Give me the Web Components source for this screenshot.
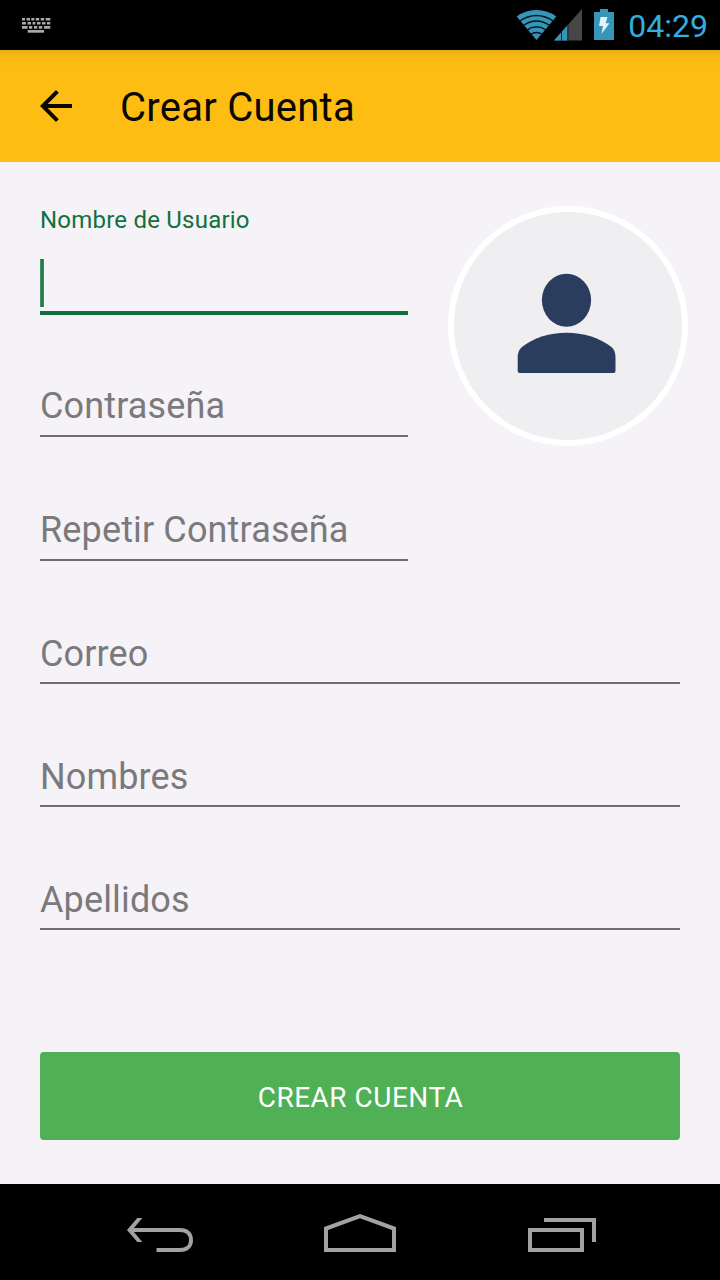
<!DOCTYPE html>
<html lang="es">
<head>
<meta charset="utf-8">
<title>Crear Cuenta</title>
<style>
  body {
    margin: 0;
    width: 720px;
    height: 1280px;
    overflow: hidden;
    background: #f5f3f7;
    font-family: Roboto, "Noto Sans", sans-serif;
    display: flex;
    flex-direction: column;
  }
  main {
    flex: 1;
    padding: 0 40px;
    display: flex;
    flex-direction: column;
  }
  .top {
    display: flex;
    gap: 40px;
  }
  .top > div {
    flex: none;
    width: 368px;
  }
  user-avatar {
    margin-top: 44px;
  }
</style>
</head>
<body>
  <status-bar>04:29</status-bar>
  <app-bar>Crear Cuenta</app-bar>
  <main>
    <div class="top">
      <div>
        <text-field focused style="height: 153px">Nombre de Usuario</text-field>
        <text-field style="height: 122px; --gap: 8px">Contraseña</text-field>
        <text-field style="height: 124px; --gap: 8px">Repetir Contraseña</text-field>
      </div>
      <user-avatar></user-avatar>
    </div>
    <text-field>Correo</text-field>
    <text-field>Nombres</text-field>
    <text-field>Apellidos</text-field>
    <raised-button>Crear Cuenta</raised-button>
  </main>
  <nav-bar></nav-bar>

<script>
class StatusBar extends HTMLElement {
  constructor() {
    super();
    this.attachShadow({ mode: "open" });
    this.shadowRoot.innerHTML = `
    <style>
    :host {
      display: flex;
      justify-content: space-between;
      height: 50px;
      box-sizing: border-box;
      padding: 0 12px 0 22px;
      background: #000;
      color: #36addf;
      font-size: 32px;
      line-height: 50px;
    }
    svg {
      display: block;
    }
    .right {
      display: flex;
    }
    .time {
      margin-left: 12px;
      padding-top: 1px;
      height: 49px;
    }
    </style>

    <svg width="30" height="50" viewBox="0 0 30 50" fill="#a9a9a9">
      <path d="M0 18h3v2.600H0zM4.500 18h3.500v2.600h-3.500zM9.300 18h3v2.600h-3zM13.700 18h3.500v2.600h-3.500zM18.700 18h3.500v2.600h-3.500zM23.700 18h4.600v2.600h-4.600z"/>
      <path d="M0 22h4v2.600H0zM5.600 22h3.400v2.600H5.600zM10.600 22h2.800v2.600h-2.800zM15 22h3.500v2.600H15zM20 22h3.500v2.600H20zM25 22h3.300v2.600H25z"/>
      <path d="M0 26.100h5.600v2.600H0zM7 26.100h3.300v2.600H7zM12 26.100h3.300v2.600H12zM16.800 26.100h3.500v2.600h-3.500zM22 26.100h6.300v2.600H22z"/>
      <path d="M5.700 30h16.300v2.700H5.700z"/>
    </svg>
    <div class="right">
      <svg width="100" height="50" viewBox="516 0 100 50">
        <path d="M536.500 40L516.700 16.500Q525 10 536.500 10T556.300 16.500z" fill="#3795b8"/>
        <g fill="none" stroke="#03141b" stroke-width="1.500">
          <path d="M519 21.500Q536.500 9.500 554 21.500"/>
          <path d="M522.500 26Q536.500 16 550.500 26"/>
          <path d="M526.500 30.300Q536.500 23.300 546.500 30.300"/>
          <path d="M530.500 34.500Q536.500 30.500 542.500 34.500"/>
        </g>
        <path d="M554 40.500L582 9V40.500z" fill="#484546"/>
        <path d="M554 40.500L567.500 25.300V40.500z" fill="#3795b8"/>
        <path d="M561.500 31V41M567.900 24V41" stroke="#0b2530" stroke-width="1"/>
        <path d="M600 9h8v3h6v28h-20V12h6z" fill="#3795b8"/>
        <path d="M600.500 17h7l-1.800 6.300h3.800L601.500 34l1.500-8h-4z" fill="#e4f3f8"/>
      </svg>
      <div class="time"><slot></slot></div>
    </div>
    `;
  }
}

customElements.define("status-bar", StatusBar);

class AppBar extends HTMLElement {
  constructor() {
    super();
    this.attachShadow({ mode: "open" });
    this.shadowRoot.innerHTML = `
    <style>
    :host {
      display: flex;
      align-items: center;
      gap: 48px;
      height: 112px;
      box-sizing: border-box;
      padding: 4px 40px 0;
      background: linear-gradient(#e9ab16, #f7b713 5px, #febd13 16px);
      color: #0a0700;
      font-size: 40px;
      line-height: 48px;
      letter-spacing: 0.25px;
    }
    svg {
      display: block;
      margin-top: -4px;
    }
    </style>

    <svg width="32" height="32" viewBox="4 4 16 16" fill="#0a0700">
      <path d="M20 11H7.830l5.590-5.590L12 4l-8 8 8 8 1.410-1.410L7.830 13H20v-2z"/>
    </svg>
    <div><slot></slot></div>
    `;
  }
}

customElements.define("app-bar", AppBar);

class TextField extends HTMLElement {
  constructor() {
    super();
    this.attachShadow({ mode: "open" });
    this.shadowRoot.innerHTML = `
    <style>
    :host {
      display: flex;
      flex-direction: column;
      justify-content: flex-end;
      height: 123px;
      box-sizing: border-box;
      border-bottom: 2px solid #6f6d70;
      color: #7b797c;
    }
    .label {
      font-size: 36px;
      line-height: 42px;
      letter-spacing: 0.14px;
      padding-bottom: var(--gap, 7px);
    }
    .caret {
      display: none;
      width: 4px;
      height: 48px;
      margin: 25px 0 4px;
      background: linear-gradient(90deg, #5a9a78, #11713e 50%, #4f936f);
    }
    :host([focused]) {
      border-bottom: 4px solid #10713e;
      color: #10713e;
    }
    :host([focused]) .label {
      font-size: 24px;
      line-height: 28px;
      letter-spacing: 0.22px;
      padding: 0;
    }
    :host([focused]) .caret {
      display: block;
    }
    </style>

    <div class="label"><slot></slot></div>
    <div class="caret"></div>
    `;
  }
}

customElements.define("text-field", TextField);

class UserAvatar extends HTMLElement {
  constructor() {
    super();
    this.attachShadow({ mode: "open" });
    this.shadowRoot.innerHTML = `
    <style>
    :host {
      display: block;
      flex: none;
      width: 240px;
      height: 240px;
    }
    svg {
      display: block;
    }
    </style>

    <svg width="240" height="240" viewBox="448 206 240 240">
      <circle cx="568" cy="326" r="117" fill="#efeef0" stroke="#fff" stroke-width="6"/>
      <g fill="#2a3d5f">
        <ellipse cx="566.500" cy="300.200" rx="24.600" ry="26.500"/>
        <path d="M517.700 371V357Q517.700 350.500 522 347Q541 332.800 566.500 332.800T611.500 347Q615.500 350.500 615.500 357V371Q615.500 373 613.500 373H519.700Q517.700 373 517.700 371z"/>
      </g>
    </svg>
    `;
  }
}

customElements.define("user-avatar", UserAvatar);

class RaisedButton extends HTMLElement {
  constructor() {
    super();
    this.attachShadow({ mode: "open" });
    this.shadowRoot.innerHTML = `
    <style>
    :host {
      display: flex;
      align-items: center;
      justify-content: center;
      height: 88px;
      margin-top: 122px;
      box-sizing: border-box;
      padding: 2px 0 0 1px;
      border-radius: 4px;
      background: #4fb055;
      color: #fff;
      font-size: 28px;
      letter-spacing: 0.5px;
      text-transform: uppercase;
    }
    </style>

    <div><slot></slot></div>
    `;
  }
}

customElements.define("raised-button", RaisedButton);

class NavBar extends HTMLElement {
  constructor() {
    super();
    this.attachShadow({ mode: "open" });
    this.shadowRoot.innerHTML = `
    <style>
    :host {
      display: flex;
      justify-content: space-between;
      height: 96px;
      box-sizing: border-box;
      padding: 28px 122px 0 124px;
      background: #000;
    }
    svg {
      display: block;
      fill: none;
      stroke: #a3a1a4;
      stroke-width: 4;
    }
    </style>

    <svg width="72" height="44" viewBox="124 1212 72 44">
      <path d="M129 1230H180C187 1230 191 1234 191 1240S187 1250 180 1250H156.500"/>
      <path d="M137.300 1218H142.300L132.300 1230L142.300 1242H137.300L127 1230z" fill="#a3a1a4" stroke="none"/>
    </svg>
    <svg width="76" height="44" viewBox="323 1212 76 44">
      <path d="M326 1250V1228.500L360 1216.200L394 1228.500V1250z"/>
    </svg>
    <svg width="72" height="44" viewBox="526 1212 72 44">
      <path d="M530 1230H582V1250H530zM544 1220H594V1242"/>
    </svg>
    `;
  }
}

customElements.define("nav-bar", NavBar);
</script>
</body>
</html>
